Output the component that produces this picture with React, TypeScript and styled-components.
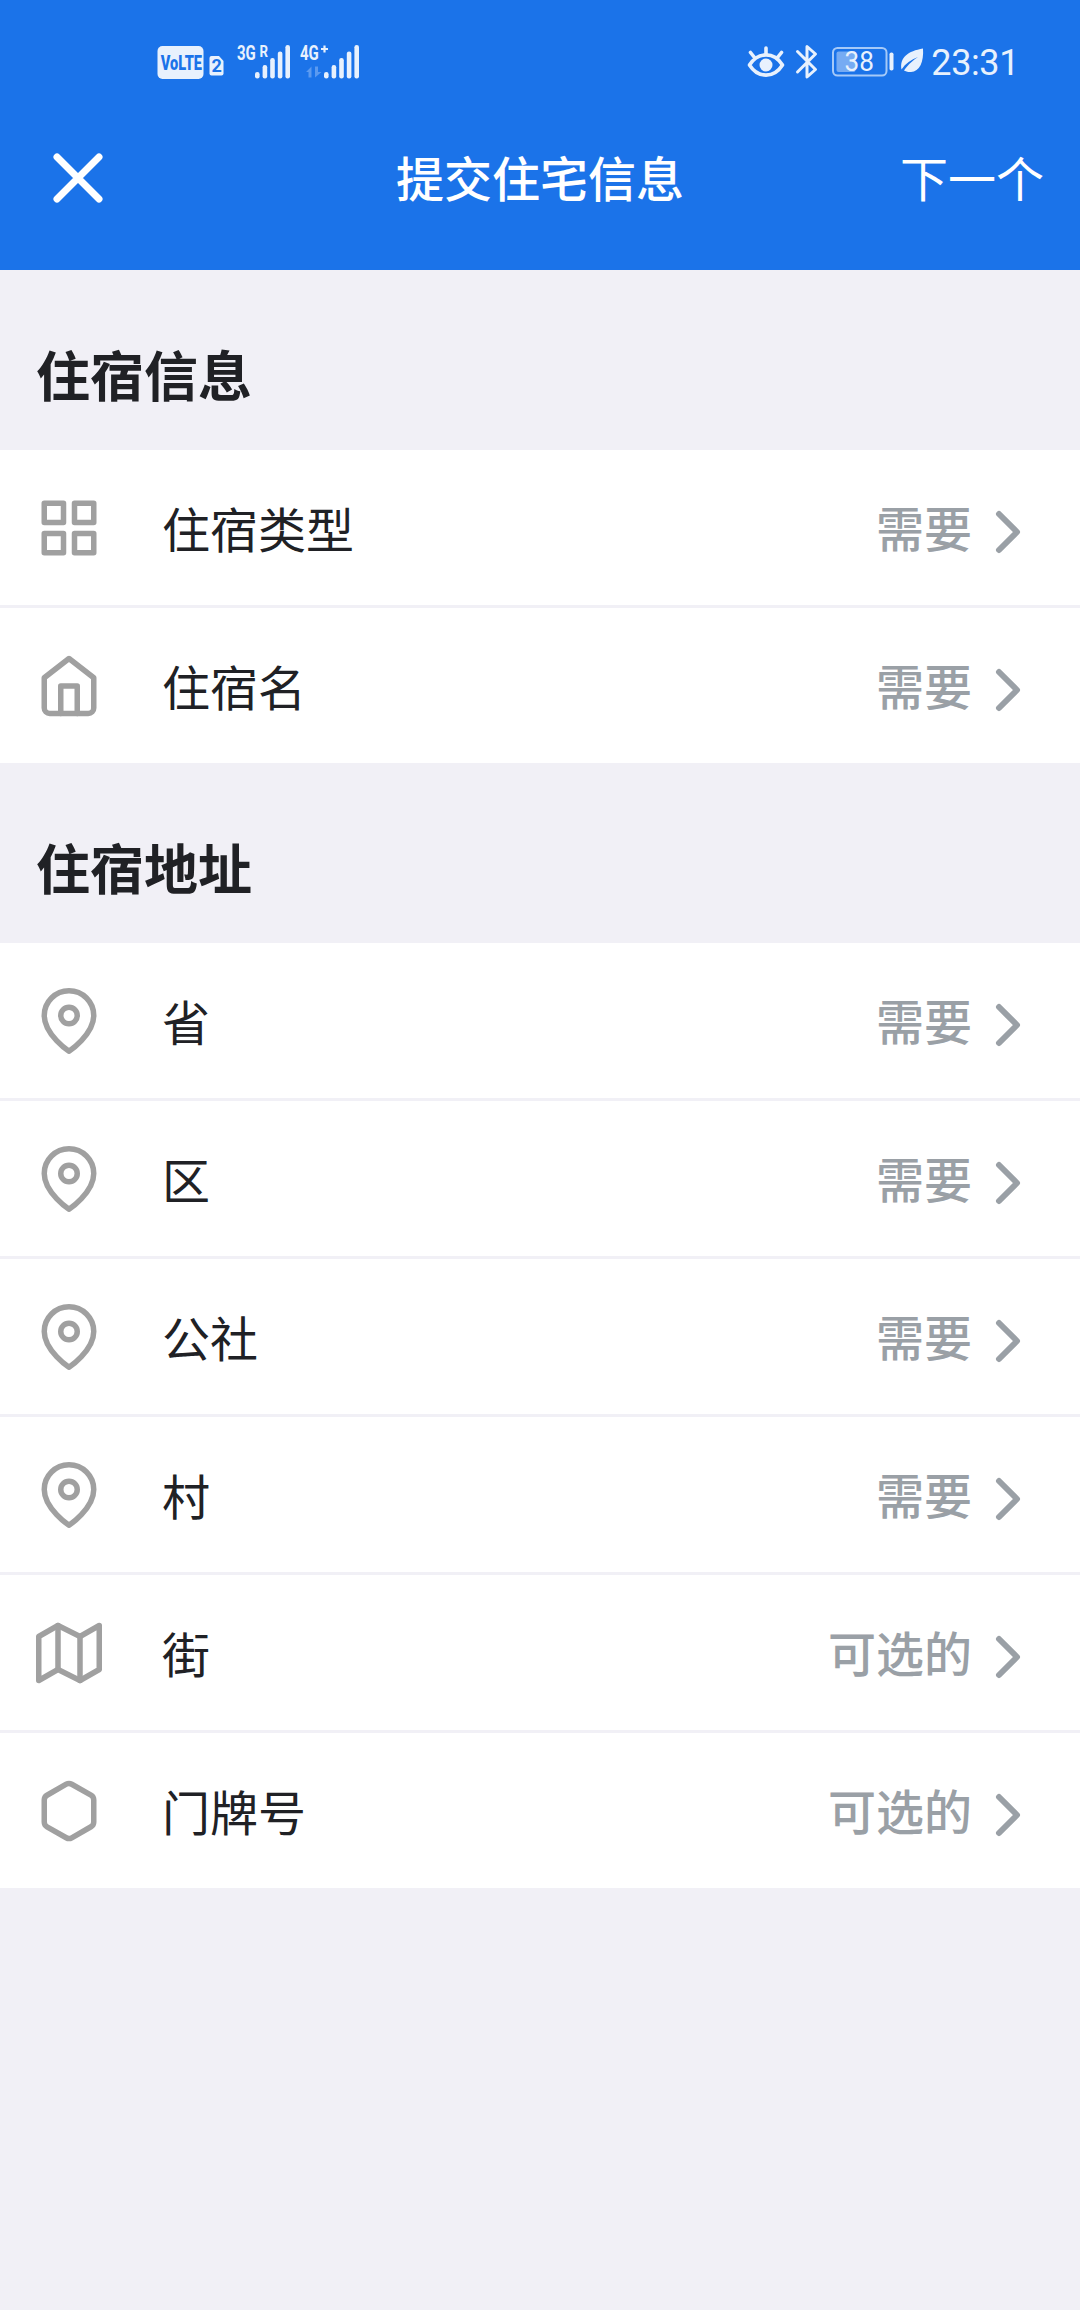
import React from "react";
import styled, { createGlobalStyle } from "styled-components";

const FONT = '"Noto Sans CJK SC", "Noto Sans", sans-serif';
const PALE = "#e8f1fd";

const GlobalStyle = createGlobalStyle`
  *, *::before, *::after { box-sizing: border-box; }
  body { margin: 0; background: #f1f0f6; }
`;

const Screen = styled.main`
  width: 1080px;
  min-height: 2310px;
  background: #f1f0f6;
  color: #202125;
  font-family: ${FONT};
`;

const TopArea = styled.header`
  height: 270px;
  background: #1b73e9;
  color: #fff;
  display: flex;
  flex-direction: column;
`;

const StatusBar = styled.div`
  height: 86px;
  padding: 38px 61px 0 157px;
  display: flex;
  justify-content: space-between;
  align-items: flex-start;
  color: ${PALE};
`;

const StatusGroup = styled.div`
  display: flex;
  align-items: flex-start;
`;

const StatusDrawing = styled.svg`
  display: block;
  flex: none;
`;

const Clock = styled.time`
  margin-left: 3px;
  padding-top: 1px;
  font: 400 36px/48px Roboto, sans-serif;
  letter-spacing: -0.4px;
`;

const NavBar = styled.nav`
  flex: 1;
  padding: 0 36px;
  display: grid;
  grid-template-columns: 1fr auto 1fr;
  align-items: center;
`;

const BarButton = styled.button<{ $end?: boolean }>`
  justify-self: ${(p) => (p.$end ? "end" : "start")};
  display: flex;
  padding: ${(p) => (p.$end ? "0 0 4px" : "0")};
  border: 0;
  background: none;
  color: inherit;
  font: 400 48px/70px ${FONT};
`;

const Title = styled.h1`
  margin: 0;
  padding-bottom: 4px;
  font-size: 48px;
  font-weight: 500;
  line-height: 70px;
`;

const SectionTitle = styled.h2`
  height: 180px;
  margin: 0;
  padding: 27px 36px 0;
  display: flex;
  align-items: center;
  font-size: 54px;
  line-height: 78px;
  font-weight: 700;
`;

const List = styled.ul`
  margin: 0;
  padding: 0;
  list-style: none;
  display: flex;
  flex-direction: column;
  gap: 3px;
`;

const Row = styled.li`
  height: 155px;
  padding: 0 36px;
  display: flex;
  align-items: center;
  background: #fff;
`;

const Label = styled.span`
  flex: 1;
  margin-left: 60px;
  padding-bottom: 2px;
  font-size: 48px;
  line-height: 70px;
`;

const Value = styled.span`
  padding-bottom: 3px;
  color: #9aa0a6;
  font-size: 48px;
  line-height: 70px;
  font-weight: 500;
`;

const Glyph = styled.svg<{ $size: number }>`
  display: block;
  flex: none;
  width: ${(p) => p.$size}px;
  height: ${(p) => p.$size}px;
  fill: none;
  stroke: currentColor;
  stroke-width: 2;
  stroke-linecap: round;
  stroke-linejoin: round;
`;

const RowGlyph = styled(Glyph)`
  color: #a0a0a0;
`;

const Chevron = styled(Glyph)`
  color: #9aa0a6;
  margin-top: 9px;
`;

type IconName = "grid" | "home" | "pin" | "map" | "hexagon";

const shapes: Record<IconName, React.ReactNode> = {
  grid: (
    <>
      <rect x="3" y="3" width="7" height="7" />
      <rect x="14" y="3" width="7" height="7" />
      <rect x="14" y="14" width="7" height="7" />
      <rect x="3" y="14" width="7" height="7" />
    </>
  ),
  home: (
    <>
      <path d="M3 9l9-7 9 7v11a2 2 0 0 1-2 2H5a2 2 0 0 1-2-2z" />
      <polyline points="9 22 9 12 15 12 15 22" />
    </>
  ),
  pin: (
    <>
      <path d="M21 10c0 7-9 13-9 13s-9-6-9-13a9 9 0 0 1 18 0z" />
      <circle cx="12" cy="10" r="3" />
    </>
  ),
  map: (
    <>
      <polygon points="1 6 1 22 8 18 16 22 23 18 23 2 16 6 8 2 1 6" />
      <path d="M8 2v16M16 6v16" />
    </>
  ),
  hexagon: (
    <path d="M21 16V8a2 2 0 0 0-1-1.73l-7-4a2 2 0 0 0-2 0l-7 4A2 2 0 0 0 3 8v8a2 2 0 0 0 1 1.73l7 4a2 2 0 0 0 2 0l7-4A2 2 0 0 0 21 16z" />
  ),
};

interface Field {
  icon: IconName;
  label: string;
  value: string;
}

const sections: { title: string; fields: Field[] }[] = [
  {
    title: "住宿信息",
    fields: [
      { icon: "grid", label: "住宿类型", value: "需要" },
      { icon: "home", label: "住宿名", value: "需要" },
    ],
  },
  {
    title: "住宿地址",
    fields: [
      { icon: "pin", label: "省", value: "需要" },
      { icon: "pin", label: "区", value: "需要" },
      { icon: "pin", label: "公社", value: "需要" },
      { icon: "pin", label: "村", value: "需要" },
      { icon: "map", label: "街", value: "可选的" },
      { icon: "hexagon", label: "门牌号", value: "可选的" },
    ],
  },
];

const SignalBars = ({ x }: { x: number }) => (
  <g fill={PALE}>
    {[6.5, 13.5, 20.5, 27, 33.5].map((h, i) => (
      <rect key={h} x={x + i * 7.6} y={40.5 - h} width="4.6" height={h} rx="2.2" />
    ))}
  </g>
);

interface StatusTextProps {
  x: number;
  y: number;
  size: number;
  squeeze?: number;
  weight?: number;
  color?: string;
  children: string;
}

const StatusText = ({ x, y, size, squeeze = 1, weight = 700, color = PALE, children }: StatusTextProps) => (
  <text
    transform={`translate(${x} ${y}) scale(${squeeze} 1)`}
    fontFamily="Roboto, sans-serif"
    fontWeight={weight}
    fontSize={size}
    fill={color}
  >
    {children}
  </text>
);

const NetworkStatus = () => (
  <StatusDrawing width="206" height="48" viewBox="0 0 206 48">
    <rect x="0.5" y="8" width="46" height="33" rx="5" fill={PALE} />
    <StatusText x={3.8} y={31.8} size={20.5} squeeze={0.71} weight={900} color="#1b73e9">VoLTE</StatusText>
    <path d="M54.5 18H62l4.500 5v12.500a2 2 0 0 1-2 2h-10a2 2 0 0 1-2-2V20a2 2 0 0 1 2-2z" fill={PALE} />
    <StatusText x={54.5} y={34.3} size={18} color="#1b73e9">2</StatusText>
    <StatusText x={80} y={21.5} size={20} squeeze={0.75}>3G</StatusText>
    <StatusText x={102.5} y={19} size={16} squeeze={0.83}>R</StatusText>
    <SignalBars x={98} />
    <StatusText x={143} y={21.5} size={20} squeeze={0.75}>4G</StatusText>
    <path d="M164 11h7M167.500 7.500v7" stroke={PALE} strokeWidth="2.200" />
    <path d="M154.500 28.500V39.500h-3V34H149zM158 28.500h3V34h3.500L158 39.500z" fill="#5b9af0" />
    <SignalBars x={167} />
  </StatusDrawing>
);

const DeviceStatus = () => (
  <StatusDrawing width="182" height="48" viewBox="746 38 182 48">
    <g fill="none" stroke={PALE} strokeWidth="3.600" strokeLinecap="round" strokeLinejoin="round">
      <path d="M749.500 65C758 51.500 774 51.500 782.500 65C774 78.500 758 78.500 749.500 65z" />
      <path d="M766 48v6M750.500 52.500l4 5M781.500 52.500l-4 5" />
      <path d="M797.500 51.500l18 18-8.500 7.500V46.500l8.500 7.500-18 18" strokeWidth="3" />
    </g>
    <circle cx="766" cy="65" r="6.500" fill={PALE} />
    <rect x="833" y="48" width="53.500" height="27.500" rx="4.500" fill="none" stroke="#a5c9f8" strokeWidth="2" />
    <rect x="836.500" y="51.500" width="19" height="20.500" rx="2" fill="#76abf3" />
    <StatusText x={844.5} y={71.3} size={27.5} squeeze={0.95} weight={400}>38</StatusText>
    <rect x="889.500" y="52.500" width="4" height="18" rx="1.800" fill={PALE} />
    <path d="M923 48.500C924 62 919.500 71.500 911 72C908 72.200 905.500 71.500 904 70.500C909 63.500 913 60.500 918 57C911 59.500 905.500 63.500 901.500 69.500C899.500 57.500 908 51 923 48.500z" fill={PALE} />
  </StatusDrawing>
);

export default function App() {
  return (
    <>
      <GlobalStyle />
      <Screen lang="zh-CN">
        <TopArea>
          <StatusBar>
            <NetworkStatus />
            <StatusGroup>
              <DeviceStatus />
              <Clock>23:31</Clock>
            </StatusGroup>
          </StatusBar>
          <NavBar>
            <BarButton aria-label="关闭">
              <Glyph $size={84} viewBox="0 0 24 24">
                <path d="M18 6L6 18M6 6l12 12" />
              </Glyph>
            </BarButton>
            <Title>提交住宅信息</Title>
            <BarButton $end>下一个</BarButton>
          </NavBar>
        </TopArea>
        {sections.map((section) => (
          <section key={section.title}>
            <SectionTitle>{section.title}</SectionTitle>
            <List>
              {section.fields.map((field) => (
                <Row key={field.label}>
                  <RowGlyph $size={66} viewBox="0 0 24 24">
                    {shapes[field.icon]}
                  </RowGlyph>
                  <Label>{field.label}</Label>
                  <Value>{field.value}</Value>
                  <Chevron $size={72} viewBox="0 0 24 24">
                    <polyline points="9 18 15 12 9 6" />
                  </Chevron>
                </Row>
              ))}
            </List>
          </section>
        ))}
      </Screen>
    </>
  );
}
